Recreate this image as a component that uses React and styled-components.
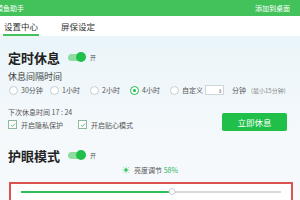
import React from "react";
import styled, { createGlobalStyle } from "styled-components";

const GlobalStyle = createGlobalStyle`
  html, body { margin: 0; padding: 0; }
  body {
    width: 300px;
    height: 200px;
    overflow: hidden;
    font-family: "Noto Sans CJK SC", "Noto Sans", sans-serif;
    background: #fff;
  }
`;

const Page = styled.div`
  width: 300px;
  height: 200px;
  display: flex;
  flex-direction: column;
  overflow: hidden;
`;

const TitleBar = styled.div`
  height: 16px;
  flex: none;
  background: #43c25c;
  color: #fff;
  font-size: 7px;
  display: flex;
  align-items: center;
  justify-content: space-between;
  padding: 0 10px 0 0;
`;

const AppName = styled.span`
  margin-left: -4px;
`;

const Tabs = styled.div`
  height: 20px;
  flex: none;
  display: flex;
  align-items: stretch;
  gap: 21px;
  padding: 0 3px;
  background: #fff;
`;

const Tab = styled.div`
  font-size: 8.5px;
  color: #333;
  display: flex;
  align-items: center;
  padding: 2px 1px 0;
  border-bottom: 2px solid ${(p) => (p.$active ? "#43c25c" : "transparent")};
`;

const Body = styled.div`
  flex: 1;
  background: linear-gradient(180deg, #eaf5f9 0%, #f5f9fc 60%, #f7f9fc 100%);
  padding: 10px 8px 0 8px;
  display: flex;
  flex-direction: column;
`;

const SectionHead = styled.div`
  display: flex;
  align-items: center;
  height: 22px;
  margin-top: ${(p) => p.$top || 0}px;
`;

const SectionTitle = styled.span`
  font-size: 13px;
  font-weight: 700;
  color: #222;
`;

const Switch = styled.span`
  position: relative;
  width: 17px;
  height: 7px;
  border-radius: 4px;
  background: #8fdc9f;
  margin-left: 8px;
  &::after {
    content: "";
    position: absolute;
    right: -1px;
    top: -2px;
    width: 10px;
    height: 10px;
    border-radius: 50%;
    background: #1fbf4a;
  }
`;

const SwitchLabel = styled.span`
  font-size: 6px;
  color: #555;
  margin-left: 5px;
`;

const Label = styled.div`
  font-size: 9px;
  line-height: 13px;
  color: #444;
  margin-top: 2px;
`;

const RadioRow = styled.div`
  display: flex;
  align-items: center;
  height: 16px;
  margin-top: -1px;
`;

const RadioItem = styled.label`
  display: flex;
  align-items: center;
  font-size: 7px;
  color: #555;
  width: ${(p) => p.$w || 40}px;
  flex: none;
  padding-left: 1px;
  box-sizing: border-box;
`;

const RadioDot = styled.span`
  width: 7px;
  height: 7px;
  border-radius: 50%;
  border: 1px solid ${(p) => (p.$on ? "#1fbf4a" : "#c8cdd2")};
  background: #fff;
  margin-right: 3px;
  display: flex;
  align-items: center;
  justify-content: center;
  &::after {
    content: "";
    width: 3px;
    height: 3px;
    border-radius: 50%;
    background: ${(p) => (p.$on ? "#1fbf4a" : "transparent")};
  }
`;

const NumBox = styled.span`
  width: 19px;
  height: 10px;
  border: 1px solid #cfd4d8;
  background: #fff;
  display: flex;
  align-items: center;
  justify-content: flex-end;
  padding-right: 1px;
  font-size: 5px;
  color: #666;
  box-sizing: border-box;
  margin-right: 8px;
`;

const Unit = styled.span`
  font-size: 7px;
  color: #555;
`;

const Hint = styled.span`
  font-size: 6px;
  color: #888;
  margin-left: 5px;
`;

const ActionRow = styled.div`
  display: flex;
  justify-content: space-between;
  align-items: flex-end;
  margin-top: 9px;
`;

const Left = styled.div`
  display: flex;
  flex-direction: column;
`;

const NextTime = styled.div`
  font-size: 7px;
  line-height: 11px;
  color: #555;
`;

const CheckRow = styled.div`
  display: flex;
  height: 13px;
`;

const CheckItem = styled.label`
  display: flex;
  align-items: center;
  font-size: 7px;
  color: #555;
  width: ${(p) => p.$w || 70}px;
`;

const Box = styled.span`
  width: 7px;
  height: 7px;
  border: 1px solid #8fb8a0;
  background: #fff;
  margin-right: 4px;
  display: flex;
  align-items: center;
  justify-content: center;
`;

const RestButton = styled.button`
  width: 65px;
  height: 18px;
  margin-right: 5px;
  border: none;
  border-radius: 2px;
  background: #1fbf4a;
  color: #fff;
  font-family: inherit;
  font-size: 8.5px;
  padding: 0;
`;

const BrightRow = styled.div`
  display: flex;
  align-items: center;
  justify-content: center;
  height: 12px;
  font-size: 7px;
  color: #555;
  margin-top: -2px;
  gap: 4px;
`;

const Percent = styled.span`
  color: #2bb55a;
`;

const SliderFrame = styled.div`
  margin-top: 6px;
  margin-left: 1px;
  width: 284px;
  height: 24px;
  border: 2px solid #d9534f;
  box-sizing: border-box;
  padding: 0 10px;
  display: flex;
  align-items: center;
  background: #fff;
`;

const Track = styled.div`
  position: relative;
  flex: 1;
  height: 2px;
  background: #d8dbde;
  margin-top: -5px;
`;

const Fill = styled.div`
  height: 100%;
  background: #2bc05a;
`;

const Knob = styled.span`
  position: absolute;
  top: -3px;
  width: 7px;
  height: 7px;
  border-radius: 50%;
  background: #fff;
  border: 1px solid #c9cdd1;
  box-sizing: border-box;
  transform: translateX(-50%);
`;

const Sun = () => (
  <svg width="8" height="8" viewBox="0 0 16 16">
    <circle cx="8" cy="8" r="3.4" fill="#2bc05a" />
    {[0, 45, 90, 135, 180, 225, 270, 315].map((a) => (
      <line
        key={a}
        x1="8"
        y1="1"
        x2="8"
        y2="2.8"
        stroke="#2bc05a"
        strokeWidth="1.6"
        transform={`rotate(${a} 8 8)`}
      />
    ))}
  </svg>
);

const Tick = () => (
  <svg width="6" height="6" viewBox="0 0 10 10">
    <path d="M1.5 5.2 L4 7.6 L8.6 2.4" fill="none" stroke="#3aa860" strokeWidth="1.2" />
  </svg>
);

const options = [
  { label: "30分钟", w: 41 },
  { label: "1小时", w: 40 },
  { label: "2小时", w: 40 },
  { label: "4小时", w: 40, on: true },
  { label: "自定义", w: 36 },
];

export default function App() {
  const brightness = 58;
  return (
    <Page>
      <GlobalStyle />
      <TitleBar>
        <AppName>摸鱼助手</AppName>
        <span>添加到桌面</span>
      </TitleBar>
      <Tabs>
        <Tab $active>设置中心</Tab>
        <Tab>屏保设定</Tab>
      </Tabs>
      <Body>
        <SectionHead>
          <SectionTitle>定时休息</SectionTitle>
          <Switch />
          <SwitchLabel>开</SwitchLabel>
        </SectionHead>
        <Label>休息间隔时间</Label>
        <RadioRow>
          {options.map((o) => (
            <RadioItem key={o.label} $w={o.w}>
              <RadioDot $on={o.on} />
              {o.label}
            </RadioItem>
          ))}
          <NumBox>⇕</NumBox>
          <Unit>分钟</Unit>
          <Hint>(最小15分钟)</Hint>
        </RadioRow>
        <ActionRow>
          <Left>
            <NextTime>下次休息时间 17 : 24</NextTime>
            <CheckRow>
              <CheckItem $w={70}>
                <Box><Tick /></Box>
                开启隐私保护
              </CheckItem>
              <CheckItem $w={70}>
                <Box><Tick /></Box>
                开启贴心模式
              </CheckItem>
            </CheckRow>
          </Left>
          <RestButton>立即休息</RestButton>
        </ActionRow>
        <SectionHead $top={13}>
          <SectionTitle>护眼模式</SectionTitle>
          <Switch />
          <SwitchLabel>开</SwitchLabel>
        </SectionHead>
        <BrightRow>
          <Sun />
          <span>
            亮度调节 <Percent>{brightness}%</Percent>
          </span>
        </BrightRow>
        <SliderFrame>
          <Track>
            <Fill style={{ width: `${brightness}%` }} />
            <Knob style={{ left: `${brightness}%` }} />
          </Track>
        </SliderFrame>
      </Body>
    </Page>
  );
}
